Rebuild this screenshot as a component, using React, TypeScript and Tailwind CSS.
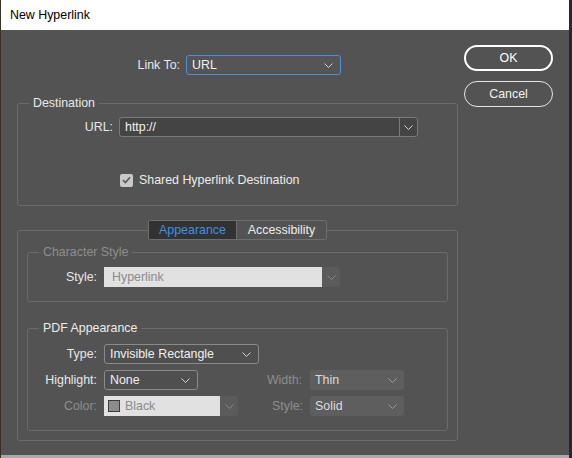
import React from "react";

const Chevron = ({ color = "#d2d2d2" }: { color?: string }) => (
  <svg width="9" height="5" viewBox="0 0 9 5" fill="none">
    <path d="M0.5 0.5L4.5 4.5L8.5 0.5" stroke={color} strokeWidth="1" />
  </svg>
);

// plain dark dropdown with a light border
function Select({ value, w, focus = false }: { value: string; w: string; focus?: boolean }) {
  return (
    <div
      className={`${w} h-[20px] flex items-center justify-between pl-[5px] pr-[7px] rounded-[3px] border ${
        focus ? "border-[#4b8fd8] bg-[#555555]" : "border-[#8a8a8a] bg-[#4f4f4f]"
      } text-[#f0f0f0]`}
    >
      <span>{value}</span>
      <Chevron />
    </div>
  );
}

// disabled dropdown without border
function DimSelect({ value }: { value: string }) {
  return (
    <div className="w-[94px] h-[20px] flex items-center justify-between pl-[5px] pr-[7px] rounded-[3px] bg-[#5e5e5e] text-[#dcdcdc]">
      <span>{value}</span>
      <Chevron color="#9a9a9a" />
    </div>
  );
}

const Label = ({ w, dim = false, children }: { w: string; dim?: boolean; children: React.ReactNode }) => (
  <div className={`${w} text-right leading-[20px] ${dim ? "text-[#8e8e8e]" : "text-[#e8e8e8]"}`}>{children}</div>
);

export default function App() {
  return (
    <div className="w-[572px] h-[458px] flex bg-[#3a3024] font-['Liberation_Sans',sans-serif] text-[12.4px] overflow-hidden">
      <div className="w-[1px]" />
      <div className="w-[568px] h-[458px] flex flex-col bg-[#a9a9a9]">
        {/* title bar */}
        <div className="h-[30px] bg-white flex items-center pl-[9px] text-black">New Hyperlink</div>

        <div className="h-[425px] bg-[#535353] flex">
          {/* left column */}
          <div className="ml-[16px] w-[441px] flex flex-col">
            <div className="mt-[25px] flex items-center h-[20px]">
              <Label w="w-[163px]">Link To:</Label>
              <div className="ml-[6px]">
                <Select value="URL" w="w-[155px]" focus />
              </div>
            </div>

            {/* Destination */}
            <fieldset className="mt-[20px] border border-[#6b6b6b] rounded-[3px] px-0 pt-[6px] pb-[18px] m-0 min-w-0">
              <legend className="ml-[11px] px-[4px] leading-[16px] text-[#e8e8e8]">Destination</legend>
              <div className="flex items-center h-[20px]">
                <Label w="w-[95px]">URL:</Label>
                <div className="ml-[6px] w-[299px] h-[20px] flex rounded-[3px] border border-[#7a7a7a] bg-[#444444] text-[#f2f2f2]">
                  <div className="flex-1 flex items-center pl-[5px] border-r border-[#7a7a7a]">http://</div>
                  <div className="w-[17px] flex items-center justify-center">
                    <Chevron />
                  </div>
                </div>
              </div>
              <div className="mt-[36px] flex items-center h-[14px] pl-[102px]">
                <div className="w-[13px] h-[13px] rounded-[2px] bg-[#c9c9c9] flex items-center justify-center">
                  <svg width="9" height="8" viewBox="0 0 9 8" fill="none">
                    <path d="M1 4.2L3.4 6.5L8 1.2" stroke="#5a5a5a" strokeWidth="1.6" />
                  </svg>
                </div>
                <span className="ml-[6px] text-[#ececec]">Shared Hyperlink Destination</span>
              </div>
            </fieldset>

            {/* Tabs box */}
            <fieldset className="mt-[14px] border border-[#6b6b6b] rounded-[3px] px-[9px] pt-0 pb-[9px] m-0 min-w-0">
              <legend className="mx-auto flex h-[20px] rounded-[2px] border border-[#6e6e6e] overflow-hidden">
                <div className="w-[87px] flex items-center justify-center bg-[#323232] text-[#3f91e6]">Appearance</div>
                <div className="w-[90px] flex items-center justify-center border-l border-[#6e6e6e] bg-[#535353] text-[#ececec]">
                  Accessibility
                </div>
              </legend>

              <fieldset className="mt-[4px] border border-[#6b6b6b] rounded-[3px] px-0 pt-[7px] pb-[14px] m-0 min-w-0">
                <legend className="ml-[11px] px-[4px] leading-[16px] text-[#8e8e8e]">Character Style</legend>
                <div className="flex items-center h-[20px]">
                  <Label w="w-[69px]">Style:</Label>
                  <div className="ml-[7px] w-[236px] h-[20px] flex">
                    <div className="w-[218px] bg-[#e1e1e1] flex items-center pl-[8px] text-[#8b8b8b]">Hyperlink</div>
                    <div className="flex-1 bg-[#5b5b5b] rounded-r-[3px] flex items-center justify-center">
                      <Chevron color="#8a8a8a" />
                    </div>
                  </div>
                </div>
              </fieldset>

              <fieldset className="mt-[18px] border border-[#6b6b6b] rounded-[3px] px-0 pt-[8px] pb-[14px] m-0 min-w-0">
                <legend className="ml-[11px] px-[4px] leading-[16px] text-[#ececec]">PDF Appearance</legend>
                <div className="flex items-center h-[20px]">
                  <Label w="w-[69px]">Type:</Label>
                  <div className="ml-[7px]">
                    <Select value="Invisible Rectangle" w="w-[155px]" />
                  </div>
                </div>
                <div className="mt-[6px] flex items-center h-[20px]">
                  <Label w="w-[69px]">Highlight:</Label>
                  <div className="ml-[7px]">
                    <Select value="None" w="w-[94px]" />
                  </div>
                  <Label w="w-[104px]" dim>
                    Width:
                  </Label>
                  <div className="ml-[8px]">
                    <DimSelect value="Thin" />
                  </div>
                </div>
                <div className="mt-[6px] flex items-center h-[20px]">
                  <Label w="w-[69px]" dim>
                    Color:
                  </Label>
                  <div className="ml-[7px] w-[134px] h-[20px] flex">
                    <div className="w-[116px] bg-[#e1e1e1] flex items-center pl-[4px] text-[#8b8b8b]">
                      <div className="w-[12px] h-[12px] border border-[#3c3c3c] bg-[#8c8c8c]" />
                      <span className="ml-[5px]">Black</span>
                    </div>
                    <div className="flex-1 bg-[#5b5b5b] rounded-r-[3px] flex items-center justify-center">
                      <Chevron color="#8a8a8a" />
                    </div>
                  </div>
                  <Label w="w-[65px]" dim>
                    Style:
                  </Label>
                  <div className="ml-[7px]">
                    <DimSelect value="Solid" />
                  </div>
                </div>
              </fieldset>
            </fieldset>
          </div>

          {/* buttons */}
          <div className="ml-[6px] pt-[15px] flex flex-col gap-[10px]">
            <div className="w-[89px] h-[26px] rounded-full border-2 border-white flex items-center justify-center text-white">OK</div>
            <div className="w-[89px] h-[26px] rounded-full border border-[#e6e6e6] flex items-center justify-center text-[#f2f2f2]">
              Cancel
            </div>
          </div>
        </div>
      </div>
      <div className="flex-1 bg-[#2c2430]" />
    </div>
  );
}
